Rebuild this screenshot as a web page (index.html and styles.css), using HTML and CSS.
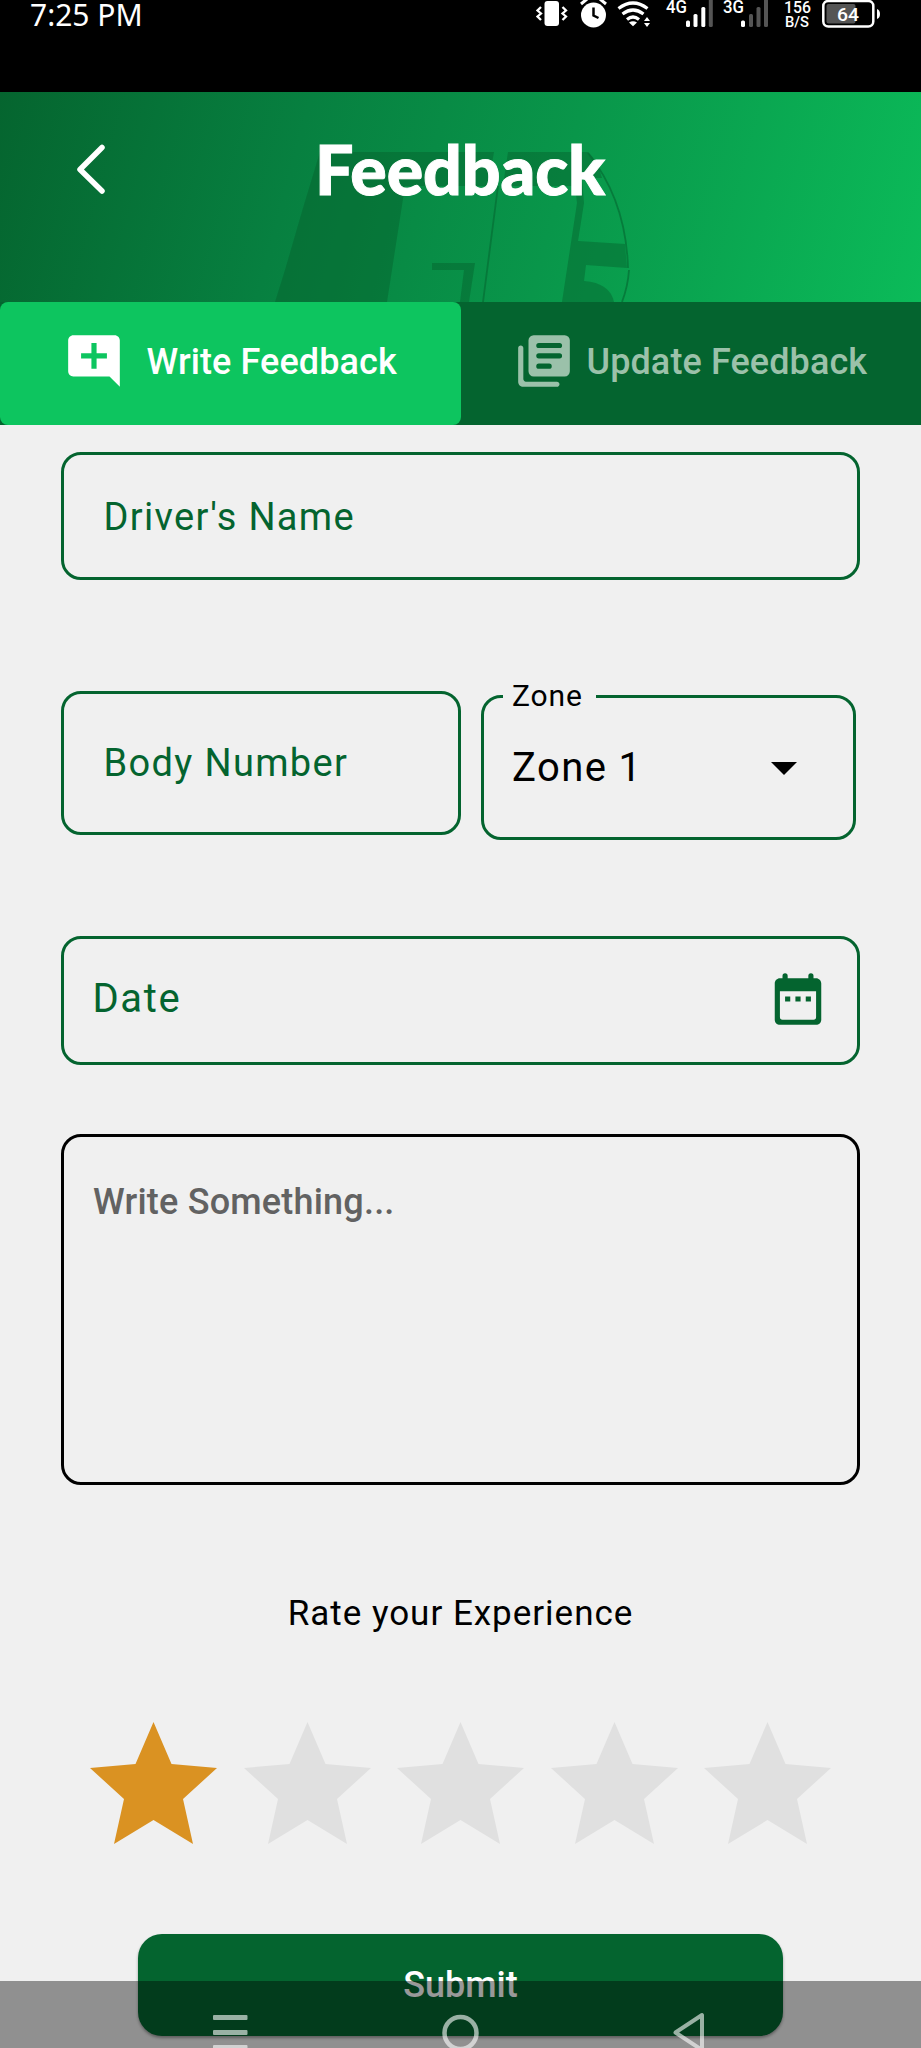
FILE: index.html
```html
<!DOCTYPE html>
<html lang="en">
<head>
<meta charset="utf-8">
<title>Feedback</title>
<link rel="stylesheet" href="styles.css">
</head>
<body>
<div class="screen">
  <div class="status">
    <span class="clock">7:25 PM</span>
    <svg class="status-icons" width="375" height="32" viewBox="520 0 375 32">
      <rect x="544.5" y="1" width="14.5" height="25" rx="3" fill="#fff"/>
      <path d="M541 7l-3.500 3.500 3.500 3-3.500 3 3.500 3.500M562.500 7l3.500 3.500-3.500 3 3.500 3-3.500 3.500" fill="none" stroke="#fff" stroke-width="2.300"/>
      <circle cx="593.500" cy="15" r="12.500" fill="#fff"/>
      <path d="M593.500 7.500v8l5 2.500" fill="none" stroke="#000" stroke-width="2.500"/>
      <path d="M581 4l6-5M606 4l-6-5" stroke="#fff" stroke-width="3"/>
      <path d="M618.500 8.500q14.500-11 29 0M622.500 14q10.500-8 21 0M627 19.500q6-5 12 0" fill="none" stroke="#fff" stroke-width="3.200"/>
      <path d="M629 22.500q4-2.500 8 0l-4 3.800zM644 21l3-4 3 4zM644 23l3 4 3-4z" fill="#fff"/>
      <text class="net" x="666" y="13" textLength="21" lengthAdjust="spacingAndGlyphs">4G</text>
      <g fill="#fff"><rect x="686" y="20.500" width="4" height="6.500" rx="1.500"/><rect x="693.500" y="14" width="4" height="13" rx="1.500"/><rect x="701.300" y="7" width="4" height="20" rx="1.500"/></g>
      <rect x="708.800" y="-1" width="4" height="28" rx="1.500" fill="#555"/>
      <text class="net" x="723" y="13" textLength="21" lengthAdjust="spacingAndGlyphs">3G</text>
      <rect x="741" y="20.500" width="4" height="6.500" rx="1.500" fill="#fff"/>
      <g fill="#555"><rect x="749" y="14" width="4" height="13" rx="1.500"/><rect x="756.500" y="7" width="4" height="20" rx="1.500"/><rect x="764" y="-1" width="4" height="28" rx="1.500"/></g>
      <text class="speed" x="784" y="12.500" textLength="27" lengthAdjust="spacingAndGlyphs">156</text>
      <text class="unit" x="785" y="27" textLength="24" lengthAdjust="spacingAndGlyphs">B/S</text>
      <rect x="823.300" y="1" width="50" height="25.500" rx="5" fill="none" stroke="#fff" stroke-width="2.500"/>
      <rect x="826.500" y="4" width="29" height="19.500" rx="2" fill="#555"/>
      <path d="M877 9q3 1 3 5t-3 5z" fill="#fff"/>
      <text class="charge" x="837" y="20.500" textLength="22" lengthAdjust="spacingAndGlyphs">64</text>
    </svg>
  </div>

  <header class="header">
    <svg class="emblem" width="921" height="210" viewBox="0 92 921 210">
      <g fill="#045e2c" fill-opacity=".42">
        <path d="M320 152H494L488 186H405L387 302H275L285 270 303 208z"/>
        <path d="M508 152H588Q597 160 602 178H582L584 203 578 241 625 244 627 268 586 265 584 281Q610 283 614 302H562L577 203 575 186H503z"/>
        <path d="M432 263H475L469 302H460L464 270H432z"/>
      </g>
      <path d="M498 186L483 302M588 153Q626 200 628 268M629 270Q628 286 622 302" fill="none" stroke="#067036" stroke-opacity=".75" stroke-width="1.800"/>
    </svg>
    <svg class="back" width="40" height="60" viewBox="0 0 40 60"><path d="M32 8.500L10 30.500 32 52" fill="none" stroke="#fff" stroke-width="5.500" stroke-linecap="round" stroke-linejoin="round"/></svg>
    <h1 class="title">Feedback</h1>
  </header>

  <nav class="tabs">
    <div class="tab tab-active">
      <svg width="62" height="62" viewBox="0 0 24 24" fill="#fff"><path d="M21.990 4c0-1.100-.890-2-1.990-2H4c-1.100 0-2 .9-2 2v12c0 1.100.9 2 2 2h14l4 4-.010-18zM17 11h-4v4h-2v-4H7V9h4V5h2v4h4v2z"/></svg>
      <span>Write Feedback</span>
    </div>
    <div class="tab tab-idle">
      <svg width="62" height="62" viewBox="0 0 24 24" fill="#9bc1aa"><path fill-rule="evenodd" d="M8 2h12a2 2 0 0 1 2 2v12a2 2 0 0 1-2 2H8a2 2 0 0 1-2-2V4a2 2 0 0 1 2-2zM10 5a1 1 0 0 0 0 2h8a1 1 0 0 0 0-2zM10 9a1 1 0 0 0 0 2h8a1 1 0 0 0 0-2zM10 13a1 1 0 0 0 0 2h4a1 1 0 0 0 0-2z"/><path d="M3 6c-.55 0-1 .45-1 1v13c0 1.100.9 2 2 2h13c.55 0 1-.45 1-1s-.45-1-1-1H5c-.55 0-1-.45-1-1V7c0-.55-.45-1-1-1z"/></svg>
      <span>Update Feedback</span>
    </div>
  </nav>

  <main class="form">
    <div class="field driver"><span>Driver's Name</span></div>
    <div class="row">
      <div class="field number"><span>Body Number</span></div>
      <fieldset class="zone">
        <legend>Zone</legend>
        <div class="choice"><span>Zone 1</span><svg width="26" height="13" viewBox="0 0 26 13"><path d="M0 0h26L13 13z"/></svg></div>
      </fieldset>
    </div>
    <div class="field date"><span>Date</span>
      <svg width="62" height="62" viewBox="0 0 24 24" fill="#04642f"><path d="M7 11h2v2H7zM11 11h2v2h-2zM15 11h2v2h-2z"/><path fill-rule="evenodd" d="M19 4h-1V3a1 1 0 0 0-2 0v1H8V3a1 1 0 0 0-2 0v1H5c-1.110 0-2 .9-2 2v14c0 1.100.89 2 2 2h14c1.100 0 2-.9 2-2V6c0-1.100-.9-2-2-2zM19 19a1 1 0 0 1-1 1H6a1 1 0 0 1-1-1V9h14z"/></svg>
    </div>
    <div class="message"><span>Write Something...</span></div>
    <p class="rate"><span>Rate your Experience</span></p>
    <div class="stars">
      <svg class="star on" viewBox="0 0 127 122"><path d="M63.500 0L81.500 42 127 46 93 77 103 122 63.500 98 24 122 34 77 0 46 45.500 42z"/></svg>
      <svg class="star" viewBox="0 0 127 122"><path d="M63.500 0L81.500 42 127 46 93 77 103 122 63.500 98 24 122 34 77 0 46 45.500 42z"/></svg>
      <svg class="star" viewBox="0 0 127 122"><path d="M63.500 0L81.500 42 127 46 93 77 103 122 63.500 98 24 122 34 77 0 46 45.500 42z"/></svg>
      <svg class="star" viewBox="0 0 127 122"><path d="M63.500 0L81.500 42 127 46 93 77 103 122 63.500 98 24 122 34 77 0 46 45.500 42z"/></svg>
      <svg class="star" viewBox="0 0 127 122"><path d="M63.500 0L81.500 42 127 46 93 77 103 122 63.500 98 24 122 34 77 0 46 45.500 42z"/></svg>
    </div>
    <div class="submit"><span>Submit</span></div>
  </main>

  <div class="navbar">
    <svg width="921" height="67" viewBox="0 1981 921 67">
      <g fill="#fff" fill-opacity=".6"><rect x="213" y="2015" width="34.500" height="5" rx="1"/><rect x="213" y="2030" width="34.500" height="5" rx="1"/><rect x="213" y="2045" width="34.500" height="5" rx="1"/></g>
      <g fill="none" stroke="#fff" stroke-opacity=".6"><circle cx="460.500" cy="2033" r="16" stroke-width="4.500"/><path d="M702 2015v35L675.500 2032.500z" stroke-width="4" stroke-linejoin="round"/></g>
    </svg>
  </div>
</div>
</body>
</html>
```

FILE: styles.css
```css
* { box-sizing: border-box; }
body { margin: 0; font-family: Roboto, "Liberation Sans", sans-serif; background: #f0f0f0; }
svg { display: block; flex: none; }
span { white-space: nowrap; }
.screen { position: relative; width: 921px; height: 2048px; overflow: hidden; background: #f0f0f0; }

.status { display: flex; justify-content: space-between; align-items: flex-start; height: 92px; padding: 0 26px 0 30px; background: #000; color: #fff; }
.clock { font: 30px/30px "Noto Sans", sans-serif; }
.status-icons text { fill: #fff; font-family: Roboto, sans-serif; }
.status-icons .net { font-size: 18px; font-weight: 500; }
.status-icons .speed { font-size: 17px; font-weight: 500; }
.status-icons .unit { font-size: 15px; font-weight: 500; }
.status-icons .charge { font-size: 19px; font-weight: 500; }

.header { position: relative; display: flex; height: 210px; padding: 46px 70px 0; background: linear-gradient(105deg, #05652f 0%, #078040 32%, #09964a 60%, #0bbb59 100%); }
.emblem { position: absolute; left: 0; top: 0; }
.back { position: relative; margin-top: 1px; }
.title { position: relative; margin: -1px 0 0; padding-left: 205px; color: #fff; font: 900 68px/64px Lato, sans-serif; letter-spacing: -.1px; -webkit-text-stroke: 1px #fff; }

.tabs { display: grid; grid-template-columns: 461px 460px; height: 123px; background: #04642f; }
.tab { display: flex; align-items: center; padding-bottom: 4px; font-size: 36px; font-weight: 500; letter-spacing: .1px; }
.tab svg { margin-bottom: 2px; }
.tab-active { gap: 21.500px; padding-left: 63px; border-radius: 8px; background: #0dc55f; color: #fff; }
.tab-idle { gap: 11.500px; padding-left: 52px; color: #9bc1aa; }

.form { padding: 27px 61px 0 61px; }
.field { display: flex; align-items: center; border: 3px solid #04642f; border-radius: 20px; color: #04642f; font-size: 38px; letter-spacing: 1.350px; }
.driver { width: 799px; height: 128px; padding: 2px 0 0 39.500px; }
.row { display: flex; gap: 20px; margin-top: 111px; height: 149px; }
.number { width: 400px; height: 144px; padding: 0 0 0 39.500px; }
.zone { width: 375px; height: 159px; margin: -10px 0 0; padding: 0 0 0 28px; border: 3px solid #04642f; border-radius: 20px; min-width: 0; }
.zone legend { margin-left: -9px; padding: 0 13px 0 9px; font-size: 30px; line-height: 30px; letter-spacing: .9px; }
.choice { display: flex; justify-content: space-between; align-items: center; height: 112px; padding-right: 56px; font-size: 40px; letter-spacing: 1.400px; }
.choice svg { margin-top: 2px; }
.date { justify-content: space-between; width: 799px; height: 129px; margin-top: 96px; padding: 0 28px 4px 28.500px; font-size: 40px; letter-spacing: 1.600px; }
.message { width: 799px; height: 351px; margin-top: 69px; padding: 43px 29px; border: 3px solid #000; border-radius: 20px; color: #626262; font-size: 36px; line-height: 44px; font-weight: 500; letter-spacing: .2px; }
.rate { margin: 107px 0 0; text-align: center; font-size: 35px; line-height: 44px; letter-spacing: .980px; }
.stars { display: flex; gap: 26.500px; margin-top: 86px; padding-left: 29px; }
.star { width: 127px; height: 122px; fill: #e0e0e0; }
.star.on { fill: #da9222; }
.submit { display: flex; align-items: center; justify-content: center; width: 645px; height: 102px; margin: 90px 0 0 77px; border-radius: 24px; background: #04642f; color: #fff; font-size: 36px; font-weight: 500; box-shadow: 0 2px 3px rgba(0,0,0,.35); }
.navbar { position: absolute; left: 0; top: 1981px; width: 921px; height: 67px; background: rgba(0,0,0,.4); }
```
